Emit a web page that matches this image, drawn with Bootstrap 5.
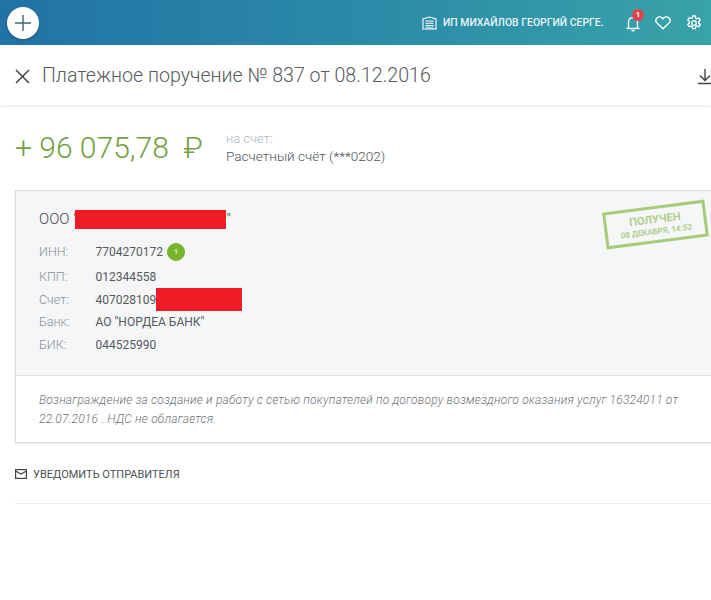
<!DOCTYPE html>
<html lang="ru">
<head>
<meta charset="utf-8">
<title>Платежное поручение</title>
<link rel="stylesheet" href="https://cdn.jsdelivr.net/npm/bootstrap@5.3.0/dist/css/bootstrap.min.css">
<style>
html,body{height:600px;overflow:hidden;background:#fff}
body{font-family:Roboto,"Liberation Sans",sans-serif;color:#4a4f55;width:711px}
.topbar{height:45px;background:linear-gradient(90deg,#2272a5 0%,#2b8aa8 50%,#38a3a8 100%);padding:1px 9px 0 7px}
.plusbtn{width:32px;height:32px;border-radius:50%;background:#fff;border:0;padding:0;box-shadow:0 1px 3px rgba(0,0,0,.25)}
.orgname{font-size:10.4px;font-weight:500;color:#fff;width:163px;white-space:nowrap;opacity:.9;margin-left:6px}
.iconbtn{position:relative;line-height:0}
.notecount{position:absolute;left:6px;top:-6px;width:12px;height:12px;border-radius:50%;background:#e2404b;color:#fff;font-size:8px;font-weight:700;line-height:12px;text-align:center}
.titlebar{height:60px;padding:2px 0 0 15px;box-shadow:0 2px 3px rgba(0,0,0,.08)}
.doctitle{font-size:19.6px;font-weight:300;color:#565b60;margin:0 0 0 12px;line-height:1.2}
.summary{padding:23px 15px 0;height:85px}
.amount{font-size:30px;font-weight:300;color:#71a041;line-height:40px;white-space:nowrap;width:211px}
.accsmall{font-size:13px;font-weight:300;color:#b0b4b8;line-height:15px;margin-top:3px}
.accname{font-size:13.6px;font-weight:300;color:#4f5459;line-height:20px}
.paycard{margin-left:15px;width:740px;border:1px solid #dcdee0;box-shadow:0 1px 3px rgba(0,0,0,.08);height:253px;position:relative;background:#fff}
.payhead{background:#f5f6f8;border-bottom:1px solid #dfe1e3;height:185px;padding:18px 0 0 23px}
.orgline{font-size:15px;font-weight:300;color:#3e4247;line-height:20px;height:20px;margin-bottom:8px}
.redact{display:inline-block;background:#ee1c25;vertical-align:top}
.redact1{width:151px;height:19px;margin-left:-2px;margin-top:1px}
.redact2{width:86px;height:23px}
.inforow{font-size:12px;line-height:20px;height:22.500px;font-weight:400;color:#55595e}
.infofirst{height:29px}
.infolabel{width:56.500px;font-weight:300;color:#8a8e93;font-size:12.5px}
.badgedot{width:18px;height:18px;border-radius:50%;background:#77b52e;color:#e8f3b0;font-size:7px;font-weight:700;line-height:18px;text-align:center;margin-left:4px}
.stamp{position:absolute;left:588px;top:15px;width:103px;height:37px;border:3px solid #a6cc7a;transform:rotate(-7.300deg);color:#b0cf8c;text-align:center;font-weight:700;line-height:1;padding-top:5px;white-space:nowrap}
.stamp1{font-size:11px;display:block;margin-bottom:3px}
.stamp2{font-size:8px;display:block}
.paynote{padding:15px 23px 0;font-size:12px;font-style:italic;font-weight:300;line-height:19px;color:#6e7277;width:690px;letter-spacing:.19px}
.notifylink{padding:25px 0 0 15px;height:60px}
.notifytext{font-size:11px;color:#4a4f55;margin-left:6px;line-height:14px}
.mailicon{margin-top:1px}
.endrule{margin:0 0 0 15px;border-top:1px solid #ebecee;height:0;width:696px}
</style>
</head>
<body>
<header class="topbar d-flex align-items-center justify-content-between">
  <button class="plusbtn d-flex align-items-center justify-content-center" aria-label="Добавить">
    <svg width="18" height="18" viewBox="0 0 18 18"><path d="M9 1v16M1 9h16" stroke="#3f6470" stroke-width="1.4" fill="none"/></svg>
  </button>
  <div class="d-flex align-items-center">
    <svg width="15" height="14" viewBox="0 0 15 14" fill="none" stroke="#fff" stroke-width="1.1"><path d="M1 13V3l6.500-2L14 3v10z"/><path d="M3.500 5h8M3.500 7.300h8M3.500 9.600h8M3.500 12h8"/></svg>
    <span class="orgname">ИП МИХАЙЛОВ ГЕОРГИЙ СЕРГЕ.</span>
    <span class="iconbtn" style="margin-left:20px">
      <svg width="14" height="17" viewBox="0 0 14 17" fill="none" stroke="#fff" stroke-width="1.400"><path d="M2.500 13V7a4.500 4.500 0 0 1 9 0v6"/><path d="M.5 13.500h13"/><path d="M5.500 15.700h3"/></svg>
      <span class="notecount">1</span>
    </span>
    <span class="iconbtn" style="margin-left:15px">
      <svg width="16" height="14" viewBox="0 0 16 14" fill="none" stroke="#fff" stroke-width="1.400"><path d="M8 12.800 2 7A3.600 3.600 0 0 1 2 2a3.700 3.700 0 0 1 5.200 0l.8.800.8-.8A3.700 3.700 0 0 1 14 2a3.600 3.600 0 0 1 0 5z"/></svg>
    </span>
    <span class="iconbtn" style="margin-left:15px">
      <svg width="16" height="16" viewBox="0 0 16 16" fill="none" stroke="#fff" stroke-width="1.300"><path d="M6.700 1h2.600l.4 2 1.300.7 1.900-.7 1.300 2.300-1.500 1.300v1.500l1.500 1.300-1.300 2.300-1.900-.7-1.300.7-.4 2H6.700l-.4-2-1.300-.7-1.900.7-1.300-2.300 1.500-1.300V6.300L1.800 5l1.300-2.300 1.900.7 1.300-.7z"/><circle cx="8" cy="8" r="2.300"/></svg>
    </span>
  </div>
</header>

<section class="titlebar d-flex align-items-center">
  <svg width="15" height="15" viewBox="0 0 15 15"><path d="M1 1l13 13M14 1 1 14" stroke="#41454a" stroke-width="1.500" fill="none"/></svg>
  <h1 class="doctitle">Платежное поручение № 837 от 08.12.2016</h1>
  <svg class="ms-auto" style="margin-right:-1px" width="14" height="17" viewBox="0 0 14 17"><path d="M7 1v11M2 7.500l5 5 5-5M0 15.500h14" stroke="#41454a" stroke-width="1.400" fill="none"/></svg>
</section>

<section class="summary d-flex">
  <div class="amount">+ 96 075,78 &nbsp;<span class="rublesign">₽</span></div>
  <div>
    <div class="accsmall">на счет:</div>
    <div class="accname">Расчетный счёт (***0202)</div>
  </div>
</section>

<section class="paycard">
  <div class="payhead">
    <div class="orgline">ООО "<span class="redact redact1"></span>"</div>
    <div class="inforow infofirst d-flex align-items-center"><span class="infolabel">ИНН:</span><span>7704270172</span><span class="badgedot">1</span></div>
    <div class="inforow d-flex align-items-center"><span class="infolabel">КПП:</span><span>012344558</span></div>
    <div class="inforow d-flex align-items-center"><span class="infolabel">Счет:</span><span>407028109</span><span class="redact redact2"></span></div>
    <div class="inforow d-flex align-items-center"><span class="infolabel">Банк:</span><span>АО "НОРДЕА БАНК"</span></div>
    <div class="inforow d-flex align-items-center"><span class="infolabel">БИК:</span><span>044525990</span></div>
  </div>
  <div class="paynote">Вознаграждение за создание и работу с сетью покупателей по договору возмездного оказания услуг 16324011 от 22.07.2016 . НДС не облагается.</div>
  <div class="stamp"><span class="stamp1">ПОЛУЧЕН</span><span class="stamp2">08 ДЕКАБРЯ, 14:52</span></div>
</section>

<section class="notifylink d-flex align-items-start">
  <svg class="mailicon" width="12" height="10" viewBox="0 0 12 10" fill="none" stroke="#41454a" stroke-width="1.200"><rect x=".6" y=".6" width="10.800" height="8.800"/><path d="M1 2.200 6 5l5-2.800"/></svg>
  <span class="notifytext">УВЕДОМИТЬ ОТПРАВИТЕЛЯ</span>
</section>
<div class="endrule"></div>
</body>
</html>
